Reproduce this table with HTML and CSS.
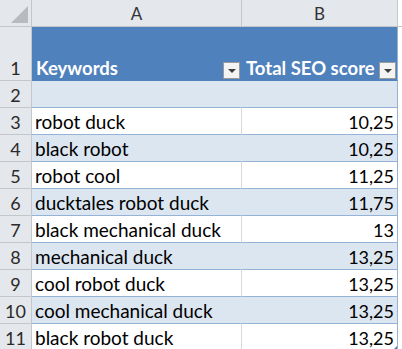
FILE: index.html
```html
<!DOCTYPE html>
<html>
<head>
<meta charset="utf-8">
<link rel="stylesheet" href="styles.css">
</head>
<body>
<div class="sheet">
  <div class="corner"><span class="tri"></span></div>
  <div class="colhead">A</div>
  <div class="colhead">B</div>
  <div class="colhead edge"></div>

  <div class="rowhead tall">1</div>
  <div class="cell hdr tall">Keywords<span class="dd"><span class="arrow"></span></span></div>
  <div class="cell hdr tall last">Total SEO score<span class="dd"><span class="arrow"></span></span></div>
  <div class="edge tall"></div>

  <div class="rowhead">2</div>
  <div class="cell band"></div>
  <div class="cell band last"></div>
  <div class="edge"></div>

  <div class="rowhead">3</div>
  <div class="cell kw">robot duck</div>
  <div class="cell num last">10,25</div>
  <div class="edge"></div>

  <div class="rowhead">4</div>
  <div class="cell kw band">black robot</div>
  <div class="cell band num last">10,25</div>
  <div class="edge"></div>

  <div class="rowhead">5</div>
  <div class="cell kw">robot cool</div>
  <div class="cell num last">11,25</div>
  <div class="edge"></div>

  <div class="rowhead">6</div>
  <div class="cell kw band">ducktales robot duck</div>
  <div class="cell band num last">11,75</div>
  <div class="edge"></div>

  <div class="rowhead">7</div>
  <div class="cell kw">black mechanical duck</div>
  <div class="cell num last">13</div>
  <div class="edge"></div>

  <div class="rowhead">8</div>
  <div class="cell kw band">mechanical duck</div>
  <div class="cell band num last">13,25</div>
  <div class="edge"></div>

  <div class="rowhead">9</div>
  <div class="cell kw">cool robot duck</div>
  <div class="cell num last">13,25</div>
  <div class="edge"></div>

  <div class="rowhead">10</div>
  <div class="cell kw band">cool mechanical duck</div>
  <div class="cell band num last">13,25</div>
  <div class="edge"></div>

  <div class="rowhead">11</div>
  <div class="cell kw">black robot duck</div>
  <div class="cell num last">13,25<span class="handle"></span></div>
  <div class="edge"></div>
</div>
</body>
</html>
```
FILE: styles.css
```css
html, body {
  margin: 0;
  padding: 0;
  background: #ffffff;
}
body {
  width: 402px;
  height: 349px;
  overflow: hidden;
  font-family: Lato, "Open Sans", sans-serif;
}
.sheet {
  display: grid;
  grid-template-columns: 32px 210px 156px 4px;
  grid-auto-rows: 27px;
}
.corner {
  background: #e4e7eb;
  border-right: 1px solid #c3c7cc;
  border-bottom: 1px solid #c3c7cc;
  position: relative;
}
.tri {
  position: absolute;
  right: 3px;
  bottom: 3px;
  width: 0;
  height: 0;
  border-left: 17px solid transparent;
  border-bottom: 17px solid #b7bbc0;
}
.colhead {
  background: #e4e7eb;
  border-right: 1px solid #c3c7cc;
  border-bottom: 1px solid #c3c7cc;
  display: flex;
  align-items: center;
  justify-content: center;
  font-size: 17px;
  color: #333333;
}
.colhead.edge {
  border-right: none;
}
.rowhead {
  background: #e4e7eb;
  border-right: 1px solid #c3c7cc;
  border-bottom: 1px solid #c3c7cc;
  display: flex;
  align-items: flex-end;
  justify-content: center;
  padding-bottom: 2px;
  font-size: 18px;
  line-height: 20px;
  color: #2a2a2a;
}
.tall {
  grid-row: span 2;
}
.cell {
  position: relative;
  border-right: 1px solid #d9d9d9;
  border-bottom: 1px solid #95b3d7;
  display: flex;
  align-items: flex-end;
  padding: 0 4px 2px 4px;
  font-size: 18px;
  line-height: 20px;
  color: #000000;
  white-space: nowrap;
  overflow: hidden;
}
.cell.kw {
  font-size: 19px;
  padding-left: 3px;
}
.cell.band {
  background: #dce6f1;
  border-right-color: #dce6f1;
}
.cell.last {
  border-right: 1px solid #95b3d7;
}
.cell.num {
  justify-content: flex-end;
  padding-right: 3px;
}
.cell.hdr {
  background: #4f81bd;
  border-right-color: #4f81bd;
  border-bottom-color: #4f81bd;
  color: #ffffff;
  font-weight: bold;
  font-size: 18.5px;
}
.cell.hdr.last {
  border-right-color: #95b3d7;
}
.dd {
  position: absolute;
  right: 1px;
  bottom: 1px;
  width: 15px;
  height: 15px;
  background: #f4f4f4;
  border: 1px solid #9a9a9a;
  display: flex;
  align-items: center;
  justify-content: center;
}
.arrow {
  width: 0;
  height: 0;
  border-left: 4px solid transparent;
  border-right: 4px solid transparent;
  border-top: 4px solid #3f3f3f;
}
.handle {
  position: absolute;
  right: 0;
  bottom: 0;
  width: 0;
  height: 0;
  border-left: 4px solid transparent;
  border-bottom: 4px solid #4f81bd;
}
.edge {
  background: #ffffff;
}
```
